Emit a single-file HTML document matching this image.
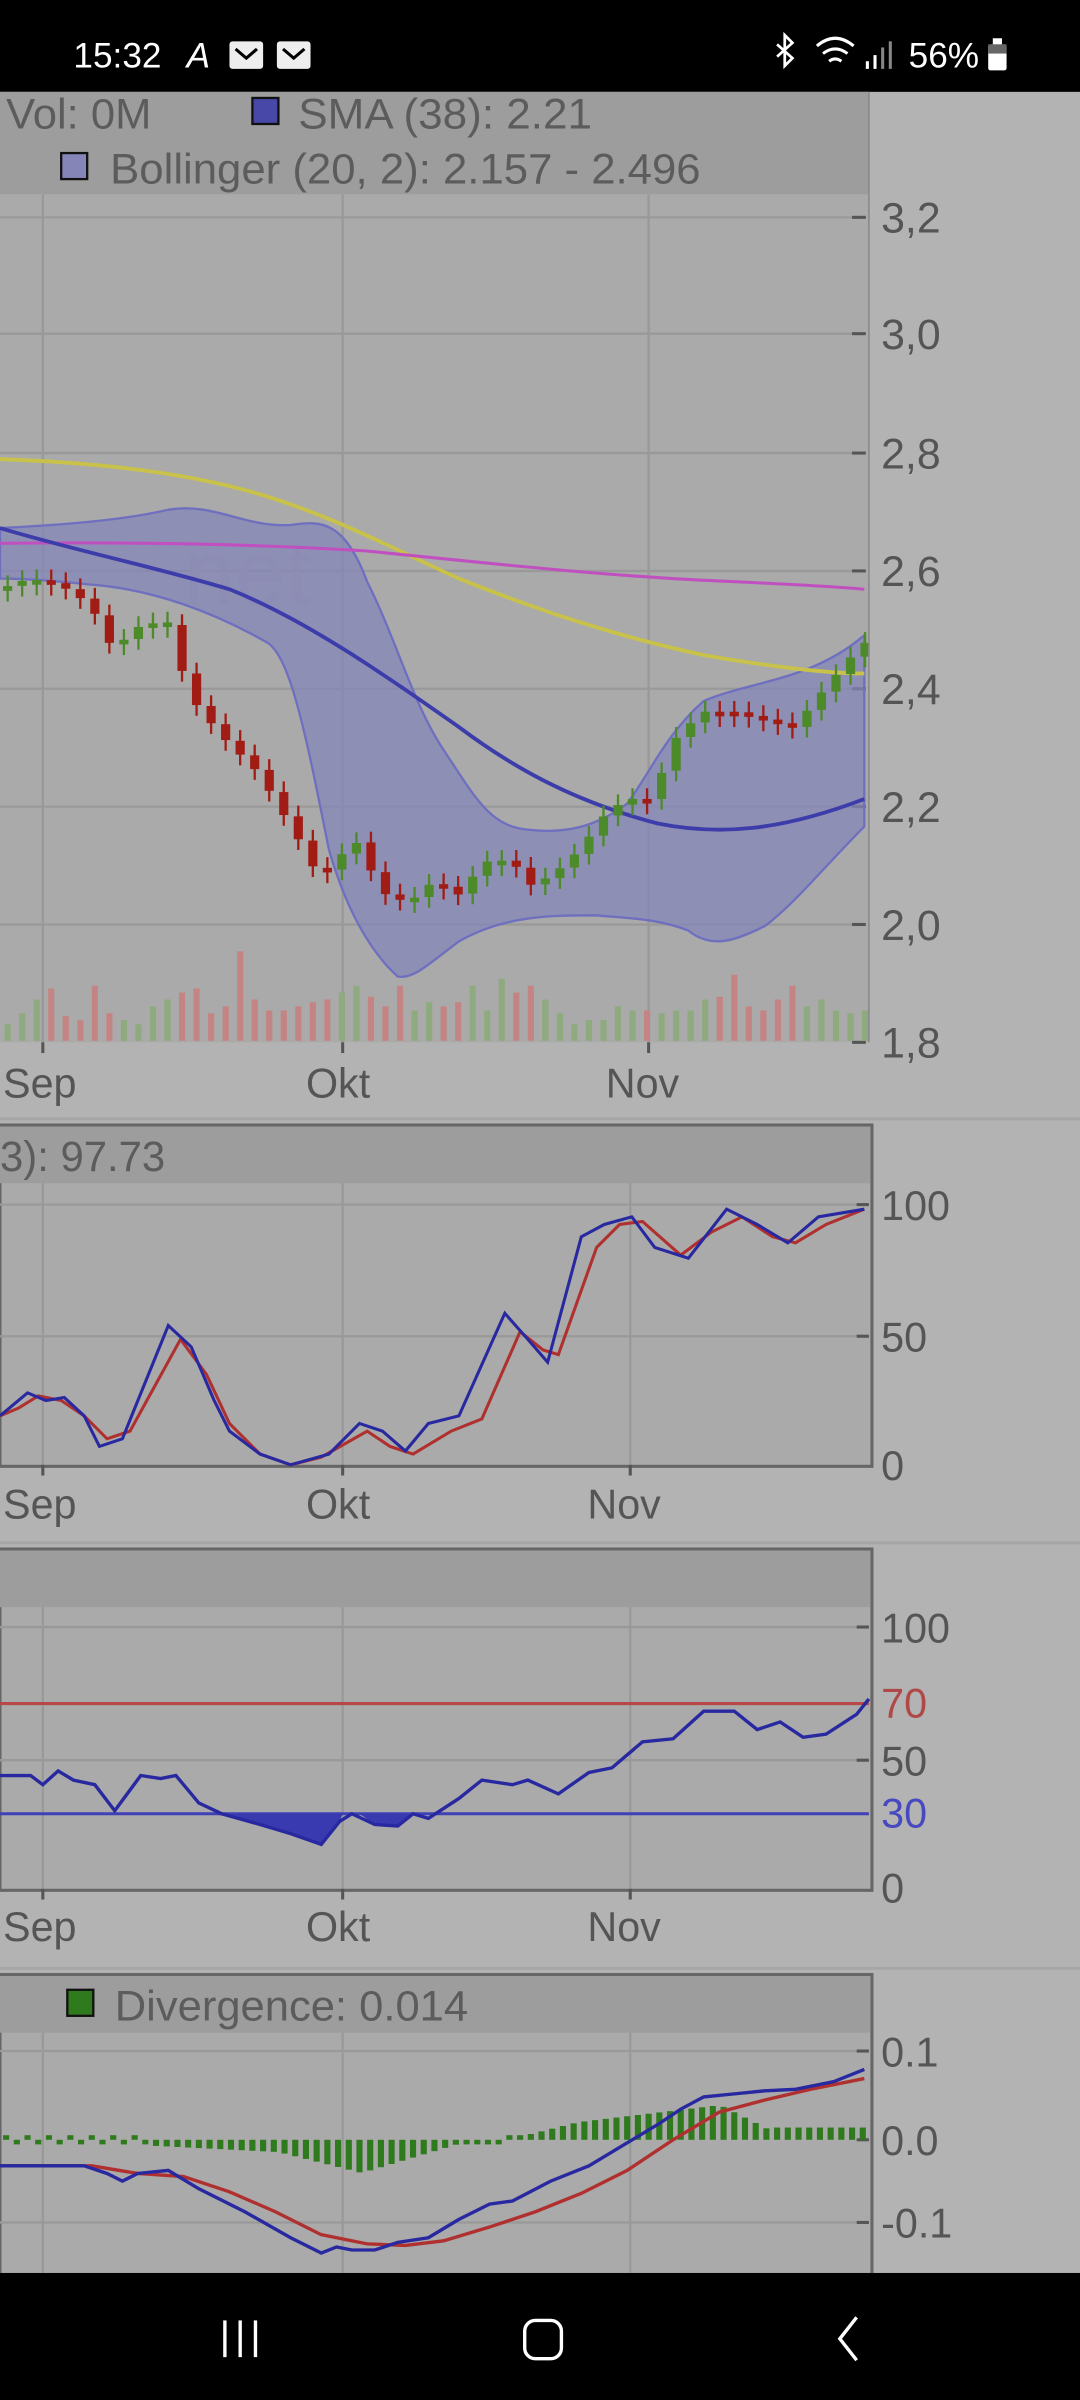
<!DOCTYPE html>
<html><head><meta charset="utf-8"><style>
html,body{margin:0;padding:0;background:#b3b3b3;width:1080px;height:2400px;overflow:hidden}
svg{display:block}
text{font-family:"Liberation Sans",sans-serif}
</style></head><body>
<svg id="s" width="1080" height="2400" viewBox="0 0 706 1568" preserveAspectRatio="none" xmlns="http://www.w3.org/2000/svg">
<rect width="706" height="1568" fill="#b3b3b3"/>
<!-- status bar -->
<rect width="706" height="60" fill="#000"/>
<text x="48" y="44" fill="#fff" font-size="23">15:32</text>
<text x="122" y="44" fill="#fff" font-size="23" font-style="italic">A</text>
<rect x="150" y="27" width="22" height="18" rx="2" fill="#eee"/><path d="M154 32 l7 6 l7 -6" stroke="#000" stroke-width="2" fill="none"/>
<rect x="181" y="27" width="22" height="18" rx="2" fill="#eee"/><path d="M185 32 l7 6 l7 -6" stroke="#000" stroke-width="2" fill="none"/>
<path d="M508 29 l10 9 l-5 5 v-20 l5 5 l-10 9" stroke="#fff" stroke-width="1.8" fill="none"/>
<path d="M534 30 q12 -10 24 0 M538 35 q8 -6 16 0 M542 40 q4 -3 8 0" stroke="#fff" stroke-width="2" fill="none"/>
<rect x="566" y="40" width="2" height="5" fill="#fff"/><rect x="571" y="36" width="2" height="9" fill="#fff"/><rect x="576" y="31" width="2" height="14" fill="#888"/><rect x="581" y="27" width="2" height="18" fill="#888"/>
<text x="594" y="44" fill="#fff" font-size="23">56%</text>
<rect x="646" y="29" width="12" height="17" rx="1.5" fill="#fff"/><rect x="649" y="25" width="6" height="4" fill="#fff"/><rect x="646" y="29" width="12" height="6" fill="#666"/>

<!-- main chart -->
<rect x="0" y="60" width="568" height="67" fill="#9c9d9c"/>
<rect x="0" y="127" width="568" height="554" fill="#a9aaa9"/>
<text x="4" y="84" fill="#5c5c5c" font-size="28" textLength="95" lengthAdjust="spacingAndGlyphs">Vol: 0M</text>
<rect x="165" y="64" width="17" height="17" fill="#4848a8" stroke="#111" stroke-width="1.5"/>
<text x="195" y="84" fill="#5c5c5c" font-size="28" textLength="192" lengthAdjust="spacingAndGlyphs">SMA (38): 2.21</text>
<rect x="40" y="100" width="17" height="17" fill="#8585b8" stroke="#111" stroke-width="1.5"/>
<text x="72" y="120" fill="#5c5c5c" font-size="28" textLength="386" lengthAdjust="spacingAndGlyphs">Bollinger (20, 2): 2.157 - 2.496</text>
<g stroke="#999" stroke-width="1.5">
<line x1="0" y1="142" x2="560" y2="142"/><line x1="0" y1="218" x2="560" y2="218"/><line x1="0" y1="296" x2="560" y2="296"/><line x1="0" y1="373" x2="560" y2="373"/><line x1="0" y1="450" x2="560" y2="450"/><line x1="0" y1="527" x2="560" y2="527"/><line x1="0" y1="604" x2="560" y2="604"/>
<line x1="28" y1="127" x2="28" y2="681"/><line x1="224" y1="127" x2="224" y2="681"/><line x1="424" y1="127" x2="424" y2="681"/>
</g>
<g stroke="#555" stroke-width="2"><line x1="557" y1="142" x2="566" y2="142"/><line x1="557" y1="218" x2="566" y2="218"/><line x1="557" y1="296" x2="566" y2="296"/><line x1="557" y1="373" x2="566" y2="373"/><line x1="557" y1="450" x2="566" y2="450"/><line x1="557" y1="527" x2="566" y2="527"/><line x1="557" y1="604" x2="566" y2="604"/><line x1="557" y1="681" x2="566" y2="681"/>
<line x1="28" y1="681" x2="28" y2="688"/><line x1="224" y1="681" x2="224" y2="688"/><line x1="424" y1="681" x2="424" y2="688"/></g>
<g fill="#555" font-size="28"><text x="576" y="152">3,2</text><text x="576" y="228">3,0</text><text x="576" y="306">2,8</text><text x="576" y="383">2,6</text><text x="576" y="460">2,4</text><text x="576" y="537">2,2</text><text x="576" y="614">2,0</text><text x="576" y="691">1,8</text></g>
<g fill="#555" font-size="27"><text x="2" y="717">Sep</text><text x="200" y="717">Okt</text><text x="396" y="717">Nov</text></g>
<text x="120" y="395" fill="#9e9ea6" font-size="60" opacity="0.8">net</text>
<path d="M0 345 C40 343 80 340 110 333 C140 328 160 345 190 343 C210 340 225 340 240 380 C260 420 270 460 290 490 C310 520 320 540 345 542 C370 545 390 540 410 525 C425 505 435 480 460 458 C490 445 530 445 565 415 L565 540 C540 565 520 590 500 605 C480 615 465 620 450 608 C430 600 410 600 390 598 C360 598 330 598 300 615 C280 630 270 640 260 638 C240 620 225 590 215 555 C200 480 190 430 175 420 C140 400 100 385 60 382 C40 380 20 378 0 378 Z" fill="#8585b8" fill-opacity="0.75" stroke="#6f6fc0" stroke-width="1.5"/>
<path d="M0 300 C60 302 120 308 170 323 C220 338 260 360 300 378 C350 398 400 415 460 428 C500 435 540 440 565 440" stroke="#c8c24a" stroke-width="2.5" fill="none"/>
<path d="M0 355 C80 354 160 355 240 360 C320 368 400 377 480 380 C520 382 545 383 565 385" stroke="#c050c0" stroke-width="2" fill="none"/>
<path d="M0 345 C50 360 100 370 150 385 C200 405 250 440 300 475 C340 505 380 525 430 538 C470 546 510 543 565 522" stroke="#3c3caa" stroke-width="2.5" fill="none"/>
<g id="candles"></g>
<g id="vol"></g>
<line x1="568" y1="60" x2="568" y2="681" stroke="#888" stroke-width="1"/>
<line x1="0" y1="731" x2="706" y2="731" stroke="#a6a6a6" stroke-width="2"/>

<!-- panel 2 stochastic -->
<rect x="0" y="735" width="570" height="223" fill="#a9aaa9" stroke="#666" stroke-width="2"/>
<rect x="0" y="736" width="569" height="37" fill="#9c9d9c"/>
<text x="0" y="765" fill="#5c5c5c" font-size="28" textLength="108" lengthAdjust="spacingAndGlyphs">3): 97.73</text>
<g stroke="#999" stroke-width="1.5"><line x1="0" y1="787" x2="568" y2="787"/><line x1="0" y1="873" x2="568" y2="873"/><line x1="28" y1="773" x2="28" y2="957"/><line x1="224" y1="773" x2="224" y2="957"/><line x1="412" y1="773" x2="412" y2="957"/></g>
<g stroke="#555" stroke-width="2"><line x1="560" y1="787" x2="568" y2="787"/><line x1="560" y1="873" x2="568" y2="873"/><line x1="28" y1="957" x2="28" y2="964"/><line x1="224" y1="957" x2="224" y2="964"/><line x1="412" y1="957" x2="412" y2="964"/></g>
<g fill="#555" font-size="27"><text x="576" y="797">100</text><text x="576" y="883">50</text><text x="576" y="967">0</text><text x="2" y="992">Sep</text><text x="200" y="992">Okt</text><text x="384" y="992">Nov</text></g>
<polyline fill="none" stroke="#b03030" stroke-width="2" points="0,925 12,920 25,912 40,915 55,925 70,940 85,935 118,875 135,898 150,930 170,950 190,957 210,952 240,935 255,945 270,950 295,935 315,927 340,870 355,882 365,885 390,815 405,800 420,798 445,820 465,805 485,795 505,808 520,812 540,800 565,790"/>
<polyline fill="none" stroke="#2828a0" stroke-width="2" points="0,925 18,910 30,915 42,913 55,925 65,945 80,940 110,866 125,880 140,915 150,935 170,950 190,957 215,950 235,930 250,935 265,948 280,930 300,925 330,858 345,875 358,890 380,808 395,800 413,795 428,815 450,822 475,790 495,800 515,812 535,795 565,790"/>
<line x1="0" y1="1008" x2="706" y2="1008" stroke="#a6a6a6" stroke-width="2"/>

<!-- panel 3 RSI -->
<rect x="0" y="1012" width="570" height="223" fill="#a9aaa9" stroke="#666" stroke-width="2"/>
<rect x="0" y="1013" width="569" height="37" fill="#9c9d9c"/>
<g stroke="#999" stroke-width="1.5"><line x1="0" y1="1063" x2="568" y2="1063"/><line x1="0" y1="1150" x2="568" y2="1150"/><line x1="28" y1="1050" x2="28" y2="1234"/><line x1="224" y1="1050" x2="224" y2="1234"/><line x1="412" y1="1050" x2="412" y2="1234"/></g>
<g stroke="#555" stroke-width="2"><line x1="560" y1="1063" x2="568" y2="1063"/><line x1="560" y1="1150" x2="568" y2="1150"/><line x1="28" y1="1234" x2="28" y2="1241"/><line x1="224" y1="1234" x2="224" y2="1241"/><line x1="412" y1="1234" x2="412" y2="1241"/></g>
<line x1="0" y1="1113" x2="568" y2="1113" stroke="#b84848" stroke-width="2"/>
<line x1="0" y1="1185" x2="568" y2="1185" stroke="#4040b8" stroke-width="2"/>
<path d="M140 1185 L170 1192 L190 1198 L210 1205 L222 1190 L224 1185 Z M235 1185 L245 1192 L260 1193 L270 1185 Z" fill="#3a3ab0"/>
<polyline fill="none" stroke="#2828a0" stroke-width="2.2" points="0,1160 20,1160 28,1166 38,1157 48,1163 62,1166 75,1183 92,1160 105,1162 115,1160 130,1178 145,1185 170,1192 190,1198 210,1205 222,1190 230,1185 245,1192 260,1193 270,1185 280,1188 300,1175 315,1163 335,1166 345,1163 365,1172 385,1158 400,1155 420,1138 440,1136 460,1118 480,1118 495,1130 510,1125 525,1135 540,1133 560,1120 568,1110"/>
<g fill="#555" font-size="27"><text x="576" y="1073">100</text><text x="576" y="1122" fill="#b04848">70</text><text x="576" y="1160">50</text><text x="576" y="1194" fill="#4848c0">30</text><text x="576" y="1243">0</text><text x="2" y="1268">Sep</text><text x="200" y="1268">Okt</text><text x="384" y="1268">Nov</text></g>
<line x1="0" y1="1286" x2="706" y2="1286" stroke="#a6a6a6" stroke-width="2"/>

<!-- panel 4 MACD -->
<rect x="0" y="1290" width="570" height="200" fill="#a9aaa9" stroke="#666" stroke-width="2"/>
<rect x="0" y="1291" width="569" height="37" fill="#9c9d9c"/>
<rect x="44" y="1300" width="17" height="17" fill="#2e7a1c" stroke="#111" stroke-width="1.5"/>
<text x="75" y="1320" fill="#5c5c5c" font-size="28" textLength="231" lengthAdjust="spacingAndGlyphs">Divergence: 0.014</text>
<g stroke="#999" stroke-width="1.5"><line x1="0" y1="1340" x2="568" y2="1340"/><line x1="0" y1="1452" x2="568" y2="1452"/><line x1="28" y1="1328" x2="28" y2="1485"/><line x1="224" y1="1328" x2="224" y2="1485"/><line x1="412" y1="1328" x2="412" y2="1485"/></g>
<g stroke="#555" stroke-width="2"><line x1="560" y1="1340" x2="568" y2="1340"/><line x1="560" y1="1398" x2="568" y2="1398"/><line x1="560" y1="1452" x2="568" y2="1452"/></g>
<g fill="#555" font-size="27"><text x="576" y="1350">0.1</text><text x="576" y="1408">0.0</text><text x="576" y="1462">-0.1</text></g>
<g id="hist"></g>
<polyline fill="none" stroke="#b03030" stroke-width="2.2" points="0,1415 60,1415 90,1420 120,1422 150,1432 180,1445 210,1460 240,1466 265,1467 290,1464 320,1455 350,1445 380,1433 410,1418 440,1398 470,1380 500,1372 530,1365 565,1358"/>
<polyline fill="none" stroke="#2828a0" stroke-width="2.2" points="0,1415 55,1415 70,1420 80,1425 90,1420 110,1418 130,1430 160,1445 190,1462 210,1472 220,1468 230,1470 245,1470 260,1465 280,1462 300,1450 320,1440 335,1438 360,1425 385,1415 410,1400 430,1388 445,1378 460,1370 480,1368 500,1366 520,1365 545,1360 565,1352"/>
<rect x="0" y="1485" width="706" height="83" fill="#000"/>
<g stroke="#fff" stroke-width="2.2" fill="none"><line x1="147" y1="1516" x2="147" y2="1540"/><line x1="157" y1="1516" x2="157" y2="1540"/><line x1="167" y1="1516" x2="167" y2="1540"/>
<rect x="343" y="1516" width="24" height="25" rx="7"/><path d="M560 1514 l-11 14 l11 14"/></g>
</svg>
<script>
(function(){
var NS="http://www.w3.org/2000/svg";
function el(p,t,a){var e=document.createElementNS(NS,t);for(var k in a)e.setAttribute(k,a[k]);p.appendChild(e);}
var pts=[[0,385],[20,378],[40,382],[60,395],[75,425],[90,410],[110,405],[125,455],[145,480],[170,505],[185,530],[200,555],[210,575],[222,560],[235,550],[250,583],[268,590],[285,575],[300,585],[318,563],[335,562],[348,578],[362,572],[380,555],[398,530],[412,522],[428,522],[440,485],[460,465],[480,465],[500,470],[520,475],[540,450],[565,420]];
function f(x){for(var i=1;i<pts.length;i++){if(x<=pts[i][0]){var a=pts[i-1],b=pts[i];return a[1]+(b[1]-a[1])*(x-a[0])/(b[0]-a[0]);}}return pts[pts.length-1][1];}
var c=document.getElementById('candles'),v=document.getElementById('vol');
var vh=[12,20,30,38,18,15,40,20,15,12,25,30,35,38,20,25,65,30,22,22,25,28,30,35,40,32,25,40,22,28,25,28,40,22,45,35,40,30,20,12,15,15,25,22,22,20,22,22,30,32,48,25,22,30,40,25,30,22,20,22,22,20];
var i=0;
for(var x=2;x<566;x+=9.5,i++){var y0=f(x-5),y1=f(x+4);var up=y1<y0;var col=up?"#4c8a2a":"#a01c14";
var tp=Math.min(y0,y1),h=Math.max(3,Math.abs(y1-y0));
el(c,'line',{x1:x+3,x2:x+3,y1:tp-7,y2:tp+h+7,stroke:col,'stroke-width':1.5});
el(c,'rect',{x:x,y:tp,width:6,height:h,fill:col});
var hh=vh[i%vh.length]*0.9;el(v,'rect',{x:x+1,y:680-hh,width:4,height:hh,fill:up?"#8eaa7e":"#c48484"});}
var hg=document.getElementById('hist');
for(var x=2;x<566;x+=7){var d;
if(x<100)d=(x%14<7?-2:2);else if(x<180)d=4+(x-100)*0.05;else if(x<240)d=8+(x-180)*0.25;else if(x<300)d=20-(x-240)*0.3;else if(x<330)d=3;else if(x<380)d=-(x-330)*0.25;else if(x<470)d=-12-(x-380)*0.12;else if(x<500)d=-22+(x-470)*0.5;else d=-8;
var y=1398,h=Math.abs(d);if(h<3)h=3;
el(hg,'rect',{x:x,y:d>0?y:y-h,width:4,height:h,fill:"#2e7a1c"});}
})();
</script>
</body></html>
